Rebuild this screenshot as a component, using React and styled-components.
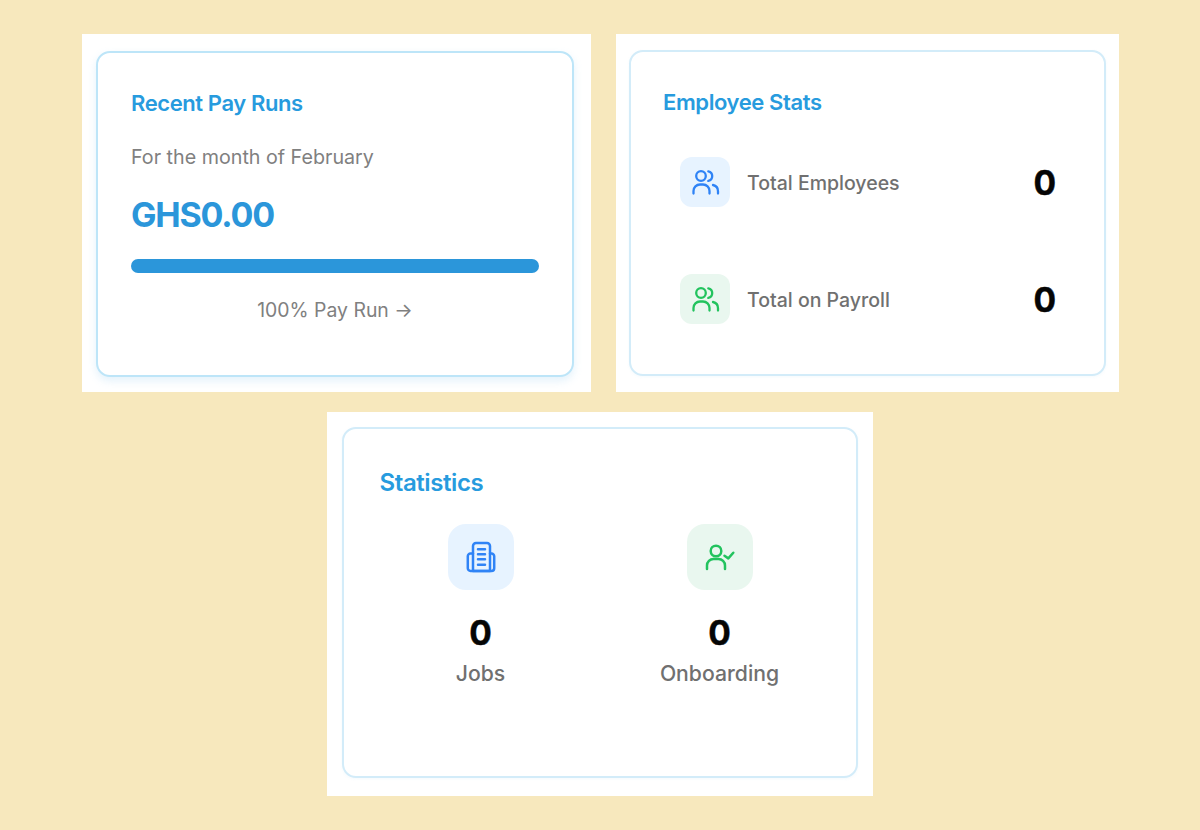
import React from 'react'
import styled, { createGlobalStyle } from 'styled-components'

const GlobalStyle = createGlobalStyle`
  html, body {
    margin: 0;
    padding: 0;
    background: #f7e8bd;
    font-family: 'Inter', 'Liberation Sans', sans-serif;
  }
`

const Page = styled.div`
  min-height: 830px;
  box-sizing: border-box;
  padding-top: 34px;
  display: flex;
  flex-direction: column;
  align-items: center;
  gap: 20px;
`

const Row = styled.div`
  display: flex;
  gap: 25px;
  padding-left: 1px;
`

const Panel = styled.div`
  background: #fff;
  box-sizing: border-box;
  width: ${(p) => p.$width}px;
  height: ${(p) => p.$height}px;
  padding: ${(p) => p.$padding};
`

const Card = styled.div`
  box-sizing: border-box;
  height: 100%;
  border: 2px solid ${(p) => (p.$strong ? '#bde5f8' : '#d3ecf9')};
  border-radius: 14px;
  background: #fff;
  box-shadow: ${(p) => (p.$strong ? '0 4px 8px rgba(120, 190, 235, 0.2)' : '0 1px 3px rgba(120, 190, 235, 0.08)')};
  padding: ${(p) => p.$padding};
`

const Title = styled.h2`
  margin: 0;
  font-size: 22px;
  line-height: 28px;
  font-weight: 600;
  letter-spacing: -0.4px;
  color: #279bde;
`

const Muted = styled.p`
  margin: 28px 0 0;
  font-size: 19.7px;
  line-height: 24px;
  color: #808080;
`

const Amount = styled.div`
  margin-top: 25px;
  font-size: 34px;
  line-height: 42px;
  font-weight: 700;
  letter-spacing: -1.2px;
  color: #2b96da;
`

const Bar = styled.div`
  margin-top: 23px;
  height: 14px;
  border-radius: 7px;
  background: #2b96da;
`

const RunLink = styled.div`
  margin-top: 25px;
  text-align: center;
  font-size: 19.4px;
  line-height: 24px;
  color: #808080;
`

const StatRow = styled.div`
  display: flex;
  align-items: center;
  height: 51px;
  margin-top: ${(p) => p.$top}px;
  padding: 0 17px;
`

const IconBox = styled.div`
  flex: none;
  display: flex;
  align-items: center;
  justify-content: center;
  width: ${(p) => p.$size}px;
  height: ${(p) => p.$size}px;
  border-radius: ${(p) => p.$radius}px;
  background: ${(p) => (p.$tone === 'green' ? '#e9f7ef' : '#e7f3ff')};
  color: ${(p) => (p.$tone === 'green' ? '#22c35e' : '#2f83f6')};
`

const StatLabel = styled.span`
  flex: 1;
  margin-left: 17px;
  padding-top: 2px;
  font-size: 19.5px;
  font-weight: 500;
  color: #707070;
`

const Count = styled.span`
  padding-top: 2px;
  font-size: 33.5px;
  line-height: 44px;
  font-weight: 700;
  -webkit-text-stroke: 0.4px #050505;
  color: #050505;
`

const Columns = styled.div`
  display: grid;
  grid-template-columns: 239px 239px;
  justify-content: center;
  margin-top: 26px;
`

const Column = styled.div`
  display: flex;
  flex-direction: column;
  align-items: center;
`

const ColumnCount = styled(Count)`
  margin-top: 19px;
`

const ColumnLabel = styled.span`
  margin-top: 5px;
  font-size: 21.2px;
  line-height: 26px;
  font-weight: 500;
  color: #707070;
`

const StatsTitle = styled(Title)`
  padding-left: 17.5px;
  font-size: 24px;
  line-height: 30px;
`

const UsersIcon = () => (
  <svg width="30" height="30" viewBox="0 0 30 30" fill="none" stroke="currentColor" strokeWidth="2.3" strokeLinecap="round" strokeLinejoin="round">
    <circle cx="11" cy="9" r="4.8" />
    <path d="M3.5 26.5v-2.5a6.5 6.5 0 0 1 6.5-6.5h3a6.5 6.5 0 0 1 6.5 6.5v2.5" />
    <path d="M18.3 4.3a4.9 4.9 0 0 1 0 9.6" />
    <path d="M23 18a6.3 6.3 0 0 1 5 6.2v2.3" />
  </svg>
)

const BuildingIcon = () => (
  <svg width="36" height="36" viewBox="0 0 36 36" fill="none" stroke="currentColor" strokeWidth="2.5" strokeLinecap="round" strokeLinejoin="round">
    <path d="M10 32V7a3 3 0 0 1 3-3h11a3 3 0 0 1 3 3v25z" />
    <path d="M10 14.5H7.5a2.7 2.7 0 0 0-2.7 2.7v12.1a2.7 2.7 0 0 0 2.7 2.7h21a2.7 2.7 0 0 0 2.7-2.7V17.2a2.7 2.7 0 0 0-2.7-2.7H27" />
    <path d="M15 10.3h7M15 15.3h7M15 20.3h7M15 25.8h7" />
  </svg>
)

const UserCheckIcon = () => (
  <svg width="36" height="36" viewBox="0 0 36 36" fill="none" stroke="currentColor" strokeWidth="2.5" strokeLinecap="round" strokeLinejoin="round">
    <circle cx="14" cy="12" r="5.3" />
    <path d="M5 30v-3.5a6.5 6.5 0 0 1 6.5-6.5h5a6.5 6.5 0 0 1 6.5 6.5V30" />
    <path d="M22.5 16.8l3.8 2.6 5-5.7" />
  </svg>
)

const App = () => {
  return (
    <Page>
      <GlobalStyle />
      <Row>
        <Panel $width={509} $height={358} $padding="17px 17px 15px 14px">
          <Card $strong $padding="35.5px 33px 0 33px">
            <Title>Recent Pay Runs</Title>
            <Muted>For the month of February</Muted>
            <Amount>GHS0.00</Amount>
            <Bar />
            <RunLink>100% Pay Run →</RunLink>
          </Card>
        </Panel>
        <Panel $width={503} $height={358} $padding="16px 13px 16px 13px">
          <Card $padding="35.5px 31px 0 32px">
            <Title>Employee Stats</Title>
            <StatRow $top={41}>
              <IconBox $size={50} $radius={12}>
                <UsersIcon />
              </IconBox>
              <StatLabel>Total Employees</StatLabel>
              <Count>0</Count>
            </StatRow>
            <StatRow $top={66}>
              <IconBox $size={50} $radius={12} $tone="green">
                <UsersIcon />
              </IconBox>
              <StatLabel>Total on Payroll</StatLabel>
              <Count>0</Count>
            </StatRow>
          </Card>
        </Panel>
      </Row>
      <Panel $width={546} $height={384} $padding="15px 15px 18px 15px">
        <Card $padding="39px 18px 0">
          <StatsTitle>Statistics</StatsTitle>
          <Columns>
            <Column>
              <IconBox $size={66} $radius={18}>
                <BuildingIcon />
              </IconBox>
              <ColumnCount>0</ColumnCount>
              <ColumnLabel>Jobs</ColumnLabel>
            </Column>
            <Column>
              <IconBox $size={66} $radius={18} $tone="green">
                <UserCheckIcon />
              </IconBox>
              <ColumnCount>0</ColumnCount>
              <ColumnLabel>Onboarding</ColumnLabel>
            </Column>
          </Columns>
        </Card>
      </Panel>
    </Page>
  )
}

export default App
